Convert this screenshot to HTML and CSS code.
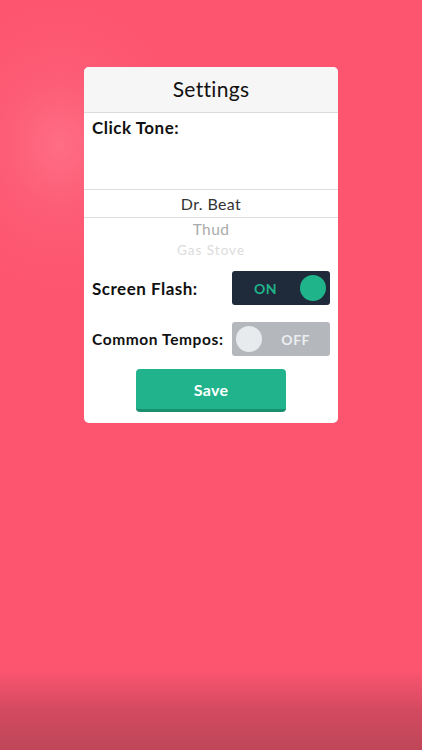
FILE: index.html
```html
<!DOCTYPE html>
<html>
<head>
<meta charset="utf-8">
<link rel="stylesheet" href="styles.css">
</head>
<body>
<div class="screen">
  <div class="card">
    <div class="header">Settings</div>
    <div class="tone">
      <div class="label big">Click Tone:</div>
    </div>
    <div class="picker">
      <div class="pick selected">Dr. Beat</div>
      <div class="pick second">Thud</div>
      <div class="pick third">Gas Stove</div>
    </div>
    <div class="row first-row">
      <div class="label big">Screen Flash:</div>
      <div class="toggle on"><span class="tlabel">ON</span><span class="knob"></span></div>
    </div>
    <div class="row second-row">
      <div class="label small">Common Tempos:</div>
      <div class="toggle off"><span class="knob"></span><span class="tlabel">OFF</span></div>
    </div>
    <div class="actions">
      <div class="save">Save</div>
    </div>
  </div>
</div>
</body>
</html>
```
FILE: styles.css
```css
html, body {
  margin: 0;
  padding: 0;
}
body {
  width: 422px;
  height: 750px;
  overflow: hidden;
  font-family: Lato, "Open Sans", sans-serif;
}
.screen {
  width: 422px;
  height: 750px;
  box-sizing: border-box;
  padding-top: 67px;
  background:
    linear-gradient(to bottom, rgba(150,50,70,0) 0px, rgba(150,50,70,0) 670px, rgba(160,60,75,0.45) 710px, rgba(170,65,80,0.75) 750px),
    radial-gradient(ellipse 120px 140px at 60px 145px, rgba(255,140,158,0.45) 0%, rgba(255,125,145,0.2) 45%, rgba(255,110,130,0) 100%),
    #fd5570;
}
.card {
  width: 254px;
  margin: 0 auto;
  background: #fff;
  border-radius: 5px;
  overflow: hidden;
}
.header {
  height: 46px;
  background: #f6f6f6;
  border-bottom: 1px solid #dcdcdc;
  display: flex;
  align-items: center;
  justify-content: center;
  font-size: 21px;
  color: #111;
  letter-spacing: 0.3px;
  padding-bottom: 2px;
  box-sizing: border-box;
}
.tone {
  height: 77px;
  box-sizing: border-box;
  padding: 4px 8px 0;
  border-bottom: 1px solid #dedede;
}
.label {
  color: #111;
  font-weight: 700;
}
.big {
  font-size: 17px;
  letter-spacing: 0.5px;
}
.small {
  font-size: 15.5px;
  letter-spacing: 0.6px;
}
.picker {
  height: 67px;
  overflow: hidden;
  text-align: center;
}
.pick {
  color: #333;
}
.selected {
  height: 27px;
  line-height: 27px;
  font-size: 16px;
  letter-spacing: 0.4px;
  border-bottom: 1px solid #dedede;
}
.second {
  height: 21px;
  line-height: 22px;
  font-size: 15.5px;
  letter-spacing: 0.4px;
  color: #ababab;
}
.third {
  height: 20px;
  line-height: 22px;
  font-size: 13.5px;
  color: #dcdcdc;
  letter-spacing: 1px;
}
.row {
  display: flex;
  align-items: center;
  justify-content: space-between;
  padding: 0 8px;
  height: 34px;
}
.first-row {
  margin-top: 14px;
}
.second-row {
  margin-top: 17px;
}
.toggle {
  width: 98px;
  height: 34px;
  border-radius: 3px;
  box-sizing: border-box;
  display: flex;
  align-items: center;
  justify-content: space-between;
  padding: 0 4px;
}
.toggle.on {
  background: #1f2b3b;
  padding-left: 22px;
}
.toggle.off {
  background: #b4b7bc;
  padding-right: 20px;
}
.knob {
  width: 26px;
  height: 26px;
  border-radius: 50%;
}
.on .knob {
  background: #20b48b;
}
.off .knob {
  background: #e8ebed;
}
.tlabel {
  font-size: 14px;
  font-weight: 700;
  letter-spacing: 0.5px;
}
.on .tlabel {
  color: #20b48b;
}
.off .tlabel {
  color: #eceef0;
}
.actions {
  display: flex;
  justify-content: center;
  padding: 13px 0 11px;
}
.save {
  width: 150px;
  height: 40px;
  box-sizing: content-box;
  background: #21b38b;
  border-bottom: 3px solid #1a8f70;
  border-radius: 4px;
  color: #fff;
  font-size: 16px;
  font-weight: 700;
  letter-spacing: 0.3px;
  display: flex;
  align-items: center;
  justify-content: center;
}
```
